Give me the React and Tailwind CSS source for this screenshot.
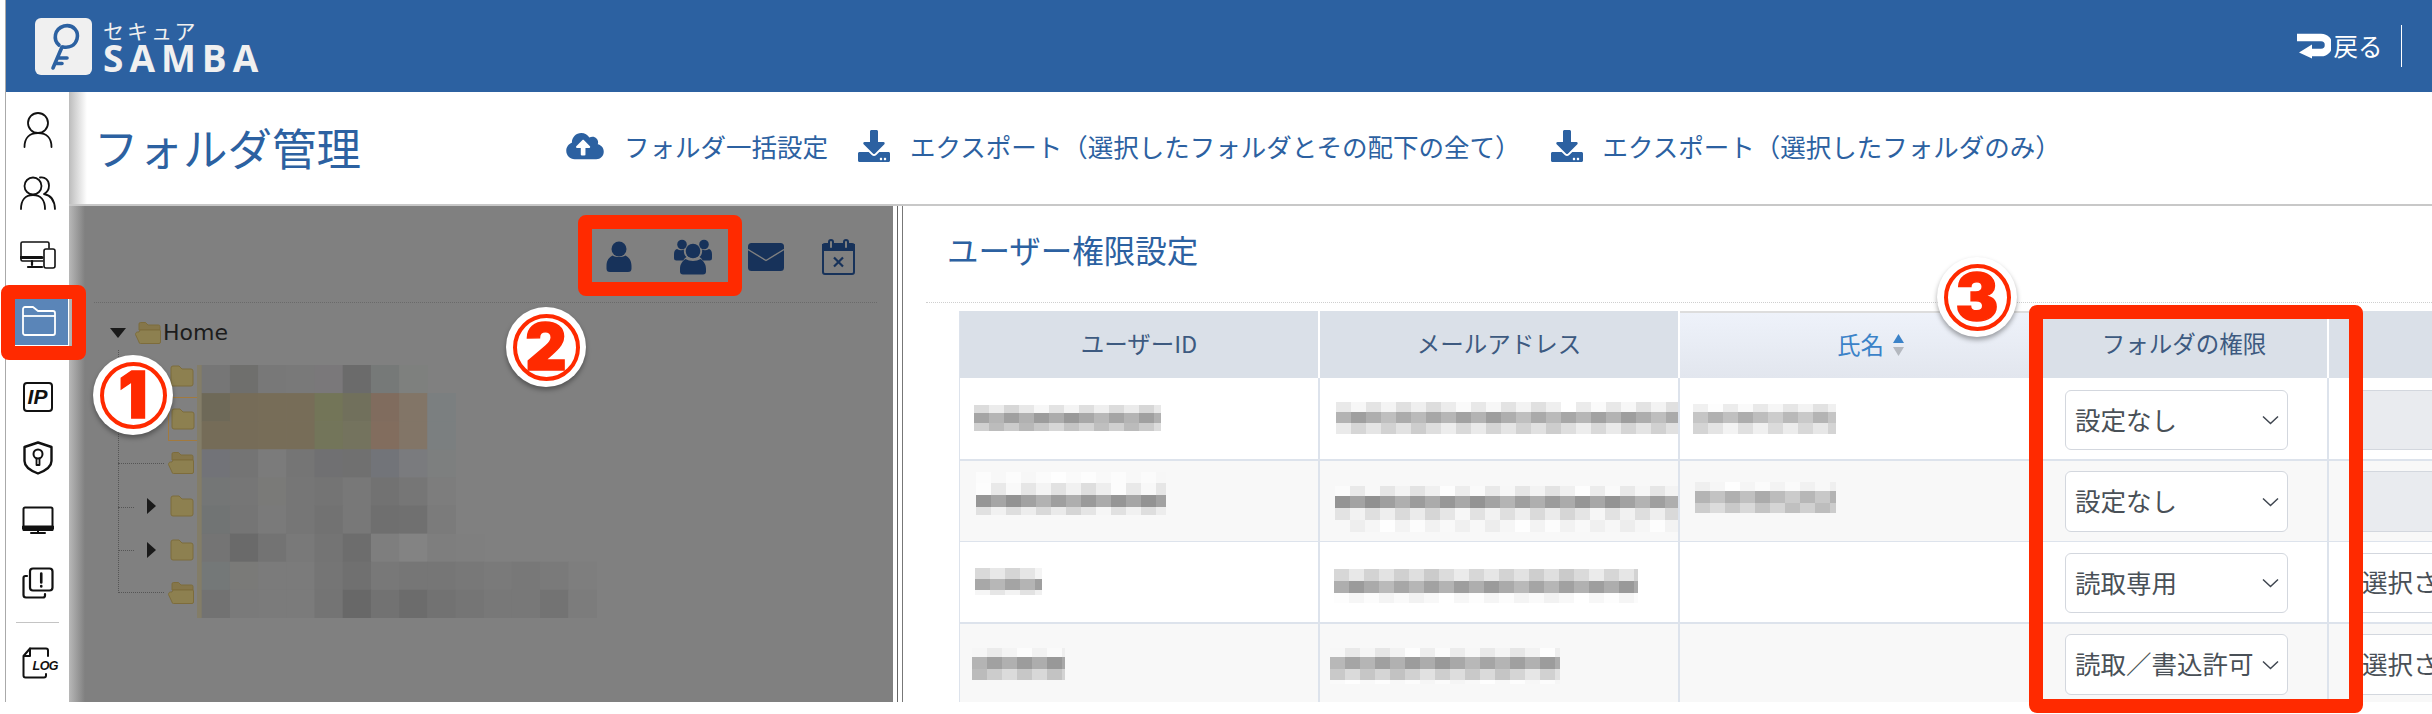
import React from "react";
import { FaCloudUploadAlt, FaDownload } from "react-icons/fa";

const CJK = "font-['Noto_Sans_CJK_JP','Noto_Sans',sans-serif]";

function Stroke({ w, h, children, color = "#111", sw = 1.8 }) {
  return (
    <svg width={w} height={h} viewBox={`0 0 ${w} ${h}`} fill="none" stroke={color} strokeWidth={sw} strokeLinecap="round" strokeLinejoin="round">
      {children}
    </svg>
  );
}

const IconUser = () => (
  <Stroke w={30} h={36}>
    <circle cx="15" cy="11" r="10" />
    <path d="M1.5 35c0-9 5-14 13.5-14s13.5 5 13.5 14" />
  </Stroke>
);
const IconGroup = () => (
  <Stroke w={36} h={34}>
    <circle cx="13" cy="10" r="8.5" />
    <path d="M1 33c0-9 4.5-14 12-14s12 5 12 14" />
    <path d="M20 1.5c5-1 9 2.5 9 8 0 4-2 7-5 8.5 6 1 10.5 6 11 15" />
  </Stroke>
);
const IconDevices = () => (
  <Stroke w={36} h={28} sw={1.6}>
    <path d="M23 20H2.500a1.500 1.500 0 0 1-1.500-1.500V2.500A1.500 1.500 0 0 1 2.500 1h25A1.500 1.500 0 0 1 29 2.500V7" />
    <path d="M1 16.500h21" strokeWidth="3" />
    <path d="M12 20v4M8 26h14" strokeWidth="2.2" />
    <rect x="24" y="8" width="11" height="19" rx="2" />
  </Stroke>
);
const IconFolder = () => (
  <svg width="34" height="30" viewBox="0 0 34 30" fill="none" stroke="#fff" strokeWidth="1.8" strokeLinejoin="round">
    <path d="M1 27V3a2 2 0 0 1 2-2h8l5 4h15a2 2 0 0 1 2 2v20a2 2 0 0 1-2 2H3a2 2 0 0 1-2-2z" />
    <path d="M1 10h32" />
  </svg>
);
const IconIP = () => (
  <div className="w-[30px] h-[30px] border-2 border-[#111] rounded-[4px] flex items-center justify-center font-['Liberation_Sans',sans-serif] font-bold italic text-[21px] leading-none text-[#111]">
    IP
  </div>
);
const IconShield = () => (
  <Stroke w={30} h={34} sw={2.4}>
    <path d="M15 1.500 28.500 6v14c0 5-5.500 9.500-13.500 12.500C7 29.500 1.500 25 1.500 20V6z" />
    <circle cx="15" cy="13" r="4.5" strokeWidth="2" />
    <path d="M13.500 17.500V24h3v-6.500" strokeWidth="1.8" />
  </Stroke>
);
const IconMonitor = () => (
  <Stroke w={32} h={28} sw={2}>
    <path d="M3 1.500h26a1.500 1.500 0 0 1 1.500 1.500v21H1.500V3A1.500 1.500 0 0 1 3 1.500z" />
    <path d="M1.500 21.500h29" strokeWidth="4" />
    <path d="M16 24v2M9 27h14" strokeWidth="2" />
  </Stroke>
);
const IconCopies = () => (
  <svg width="32" height="32" viewBox="0 0 32 32" fill="none" stroke="#111" strokeWidth="2.2" strokeLinejoin="round" strokeLinecap="round">
    <rect x="8" y="1.500" width="22.500" height="22" rx="3" />
    <path d="M5 9H3.500A2 2 0 0 0 1.500 11v17a2.500 2.500 0 0 0 2.500 2.500h17a2 2 0 0 0 2-2V27" />
    <path d="M19.250 6.500v9M19.250 19v.5" strokeWidth="2.6" />
  </svg>
);
const IconLog = () => (
  <div className="relative w-[32px] h-[32px]">
    <svg width="32" height="32" viewBox="0 0 32 32" fill="none" stroke="#111" strokeWidth="2" strokeLinejoin="round" strokeLinecap="round">
      <path d="M8 1.500h16a2 2 0 0 1 2 2V9" />
      <path d="M24 27v1.500a2 2 0 0 1-2 2H3.500a2 2 0 0 1-2-2V9L8 1.500V9H1.500" />
    </svg>
    <span className="absolute left-[11px] top-[13px] font-['Liberation_Sans',sans-serif] font-bold italic text-[12.5px] leading-none text-[#111] tracking-[-0.5px]">LOG</span>
  </div>
);

const IconPerson = () => (
  <svg width="26" height="32" viewBox="0 0 26 32" fill="#17325a">
    <circle cx="13" cy="8" r="7.5" />
    <path d="M0.500 25c0-6 3-9 6-10.500 3.500 2 9.500 2 13 0 3 1.500 6 4.500 6 10.500v2.500a3.500 3.500 0 0 1-3.500 3.500H4a3.500 3.500 0 0 1-3.500-3.500z" />
  </svg>
);
const IconPeople = () => (
  <svg width="38" height="36" viewBox="0 0 38 36" fill="#17325a">
    <circle cx="8" cy="5.500" r="4.8" />
    <circle cx="30" cy="5.500" r="4.8" />
    <path d="M0 15c0-3 1.500-4.500 3-5 2.500 1.500 5 1.500 7 .5-.5 3 .5 6 2.500 7.500-1.500.8-2.500 2-3.200 3.500H2.500A2.500 2.500 0 0 1 0 19z" />
    <path d="M38 15c0-3-1.500-4.500-3-5-2.500 1.500-5 1.500-7 .5.5 3-.5 6-2.500 7.500 1.500.8 2.500 2 3.200 3.500h6.800A2.500 2.500 0 0 0 38 19z" />
    <circle cx="19" cy="12" r="7.3" />
    <path d="M6 30c0-5 2.500-8 5.500-10 4 2.500 11 2.500 15 0 3 2 5.500 5 5.500 10v2.500a3 3 0 0 1-3 3H9a3 3 0 0 1-3-3z" />
  </svg>
);
const IconMail = () => (
  <svg width="36" height="28" viewBox="0 0 36 28" className="ml-[36px]">
    <rect width="36" height="28" rx="3.5" fill="#17325a" />
    <path d="M0 6.500 18 17.500 36 6.500" fill="none" stroke="#808080" strokeWidth="1.4" />
  </svg>
);
const IconCalendar = () => (
  <svg width="33" height="36" viewBox="0 0 33 36" fill="none" stroke="#17325a" strokeWidth="2" className="ml-[38px]">
    <rect x="1" y="5" width="31" height="30" rx="2" />
    <path d="M1 6h31v5H1z" fill="#17325a" />
    <rect x="7" y="1" width="4" height="9" rx="2" fill="#808080" />
    <rect x="22" y="1" width="4" height="9" rx="2" fill="#808080" />
    <path d="M12 18.500l9 9M21 18.500l-9 9" strokeWidth="2.2" />
  </svg>
);

function TreeFolder({ open }) {
  return (
    <svg width="26" height="22" viewBox="0 0 26 22" className="shrink-0">
      {open ? (
        <>
          <path d="M4 2a1.500 1.500 0 0 1 1.500-1.500h5L13 3h10.500A1.500 1.500 0 0 1 25 4.500V8H4z" fill="#85764a" stroke="#7d6c3c" />
          <path d="M5 8h19.500a1 1 0 0 1 1 1v11a1.500 1.500 0 0 1-1.500 1.500H5.500A1.500 1.500 0 0 1 4 20L.5 12.500C.5 11 1.500 10 2.500 10H4z" fill="#8d8050" stroke="#7d6c3c" />
        </>
      ) : (
        <path d="M3 3a2 2 0 0 1 2-2h6l3 3h9a2 2 0 0 1 2 2v13a2 2 0 0 1-2 2H5a2 2 0 0 1-2-2z" fill="#8d8050" stroke="#7d6c3c" />
      )}
    </svg>
  );
}

const MOSAIC = [
  ["#767676", "#6f6f6d", "#787878", "#797979", "#7a787a", "#6b6b6b", "#767978", "#7e807e"],
  ["#6e6958", "#766c58", "#776d58", "#776d58", "#737558", "#71705c", "#806c5e", "#827567", "#7b7f80"],
  ["#756c58", "#766c58", "#776d58", "#776d58", "#73755a", "#74735e", "#826d5e", "#827567", "#7b7f80"],
  ["#727378", "#747474", "#7b7b7b", "#757575", "#707072", "#707070", "#727479", "#7a7b7e", "#7d7f7f"],
  ["#747676", "#767676", "#7a7a78", "#767676", "#747474", "#787878", "#727272", "#767676", "#7d7d7d"],
  ["#717474", "#757575", "#7a7a7a", "#767676", "#727272", "#787878", "#6f6f6f", "#707070", "#7b7b7b"],
  ["#747474", "#6a6a6a", "#737373", "#797979", "#747474", "#6d6d6d", "#7e7e7e", "#838383", "#7e7e7e", "#7f7f7f"],
  ["#747878", "#7a7a78", "#7b7b7b", "#7b7b7b", "#757575", "#707070", "#787878", "#767676", "#767676", "#787878", "#7a7a7a", "#787878", "#7a7a7a", "#7e7e7e"],
  ["#727272", "#7a7a7a", "#7b7b7b", "#7b7b7b", "#747474", "#686868", "#727272", "#6c6c6c", "#727272", "#757575", "#787878", "#787878", "#737373", "#7c7c7c"],
];

function TreeMosaic() {
  return (
    <svg width="404" height="253" className="absolute left-[103px] top-[53px]">
      <rect x="0" y="0" width="5" height="253" fill="#837d68" />
      {MOSAIC.map((row, r) =>
        row.map((c, i) => <rect key={i} x={4.7 + i * 28.2} y={r * 28.1} width="28.7" height="28.6" fill={c} />)
      )}
    </svg>
  );
}

function Blur({ w, bands, cell = 15, left = 0, top = 0, seed = 1 }) {
  let y = 0;
  const total = bands.reduce((s, b) => s + b[0], 0);
  const n = Math.ceil(w / cell);
  return (
    <svg width={w} height={total} className="block" style={{ marginLeft: left, marginTop: top }}>
      {bands.map(([h, v], bi) => {
        const rects = [];
        for (let i = 0; i < n; i++) {
          const j = ((i * 7 + bi * 13 + seed * 5) * 2654435761 >>> 0) % 100;
          const amp = Math.min(255 - v, 18);
          const g = Math.round(v + ((j - 50) / 50) * amp);
          rects.push(<rect key={i} x={i * cell} y={y} width={cell + 0.5} height={h} fill={`rgb(${g},${g},${g})`} />);
        }
        y += h;
        return <g key={bi}>{rects}</g>;
      })}
    </svg>
  );
}

function Select({ label, h = "h-[60px]" }) {
  return (
    <div className={`${h} w-[223px] bg-white border border-[#d3d7de] rounded-[6px] flex items-center justify-between pl-[9px] pr-[8px] text-[25.5px] text-[#495057]`}>
      <span className="whitespace-nowrap leading-none -mt-[3px]">{label}</span>
      <svg width="17" height="10" viewBox="0 0 17 10" fill="none" stroke="#3f4650" strokeWidth="1.5" className="shrink-0">
        <path d="M1 1.500 8.500 8.500l7.500-7" />
      </svg>
    </div>
  );
}

function Field({ disabled, text, h = "h-[60px]" }) {
  return (
    <div className={`${h} ml-[20px] w-[120px] border-y whitespace-nowrap overflow-hidden flex items-center pl-[13px] pb-[3px] text-[25.5px] text-[#495057] ${disabled ? "bg-[#e9ebef] border-[#d3d7de]" : "bg-white border-[#d3d7de]"}`}>
      {text}
    </div>
  );
}

const ROWS = [
  {
    h: "h-[83px]", pt: "pt-[12px]", bg: "bg-white", border: "border-b-2",
    label: "設定なし", dis: true,
    c1: <Blur w={187} left={14} top={27} bands={[[8, 232], [10, 168], [8, 202]]} seed={1} />,
    c2: <Blur w={343} left={16} top={24} bands={[[10, 238], [11, 176], [11, 222]]} seed={2} />,
    c3: <Blur w={143} left={13} top={26} bands={[[8, 240], [11, 188], [11, 230]]} seed={3} />,
  },
  {
    h: "h-[81px]", pt: "pt-[10px]", bg: "bg-[#f8f8f8]", border: "border-b", sh: "h-[61px]",
    label: "設定なし", dis: true,
    c1: <Blur w={190} left={16} top={11} bands={[[11, 251], [12, 238], [12, 162], [8, 228]]} seed={4} />,
    c2: <Blur w={345} left={15} top={25} bands={[[10, 240], [12, 162], [12, 232], [12, 246]]} seed={5} />,
    c3: <Blur w={141} left={15} top={21} bands={[[9, 247], [12, 188], [10, 204]]} seed={6} />,
  },
  {
    h: "h-[82px]", pt: "pt-[11px]", bg: "bg-white", border: "border-b-2",
    label: "読取専用", text: "選択されていません",
    c1: <Blur w={67} left={15} top={26} bands={[[11, 228], [11, 170], [5, 240]]} seed={7} />,
    c2: <Blur w={304} left={14} top={27} bands={[[12, 220], [12, 170], [10, 248]]} seed={8} />,
  },
  {
    h: "h-[78px]", pt: "pt-[10px]", bg: "bg-[#f8f8f8]", sh: "h-[61px]",
    label: "読取／書込許可", text: "選択されていません",
    c1: <Blur w={93} left={12} top={24} bands={[[9, 245], [12, 170], [11, 204]]} seed={9} />,
    c2: <Blur w={230} left={10} top={24} bands={[[9, 242], [12, 168], [11, 212], [4, 250]]} seed={10} />,
  },
];

function Badge({ n, className }) {
  return (
    <div className={`absolute w-[80px] h-[80px] rounded-full bg-white shadow-[0_3px_5px_rgba(0,0,0,0.35)] flex items-center justify-center ${className}`}>
      <div className="w-[67px] h-[67px] rounded-full border-[4px] border-[#ff2a00] flex items-center justify-center">
        <span className="font-['Inter',sans-serif] font-black text-[64px] leading-none text-[#ff2a00] [-webkit-text-stroke:1.5px_#ff2a00]">{n}</span>
      </div>
    </div>
  );
}

const RedBox = ({ className }) => <div className={`absolute border-[14px] border-[#ff2a00] rounded-[8px] ${className}`} />;

const TreeRow = ({ caret, open, selected }) => (
  <div className="relative h-[43.5px] flex items-center">
    {caret && <div className="absolute left-[53px] w-0 h-0 border-y-[8px] border-y-transparent border-l-[9px] border-l-[#1a1a1a]" />}
    <div className={`absolute left-[74px] ${selected ? "w-[30px] h-[44px] border border-[#a27a3e] flex items-center" : "w-[26px]"}`}>
      <TreeFolder open={open} />
    </div>
  </div>
);

export default function App() {
  return (
    <div className={`relative w-[2432px] h-[714px] overflow-hidden bg-white flex ${CJK}`}>
      <div className="w-[5px] shrink-0" />
      <div className="w-px h-[702px] shrink-0 bg-[#aaaaaa]" />
      <div className="flex-1 min-w-0 h-[702px] flex flex-col">
        {/* top bar */}
        <header className="h-[92px] shrink-0 bg-[#2c61a1] flex items-center pl-[29px] text-white">
          <div className="w-[57px] h-[57px] bg-[#f0f0f0] rounded-[6px] flex items-center justify-center">
            <svg width="40" height="50" viewBox="0 0 40 50" fill="none" stroke="#2c61a1" strokeWidth="3.6" strokeLinecap="round">
              <path d="M15 24C9 19 10 8 20 5c10-2 15 6 13 13-2 7-8 9-14 8" />
              <path d="M18 26 9 47M14 37h9M11 42.500h7" />
            </svg>
          </div>
          <div className="ml-[11px] flex flex-col text-[#f0f0f0] leading-none -mt-[1px]">
            <span className="text-[21px] tracking-[3px] leading-[24px]">セキュア</span>
            <span className="font-['Open_Sans',sans-serif] font-bold text-[37px] tracking-[6px] leading-[31px] h-[31px]">SAMBA</span>
          </div>
          <div className="ml-auto flex items-center">
            <svg width="34" height="26" viewBox="0 0 34 26" fill="none" className="shrink-0">
              <path d="M0 4.500h24c10 0 10 15 0 15H12" stroke="#fff" strokeWidth="7.5" />
              <path d="M2 19.500 15 11.500v14z" fill="#fff" />
            </svg>
            <span className="ml-[3px] text-[24.5px] leading-none">戻る</span>
            <div className="ml-[18px] mr-[30px] w-[1.5px] h-[42px] bg-white" />
          </div>
        </header>

        <div className="flex-1 min-h-0 flex">
          {/* sidebar */}
          <aside className="w-[63px] shrink-0 bg-white flex flex-col items-center pt-[7px]">
            <div className="h-[62px] flex items-center justify-center"><IconUser /></div>
            <div className="h-[64px] flex items-center justify-center"><IconGroup /></div>
            <div className="h-[62px] flex items-center justify-center"><IconDevices /></div>
            <div className="mt-[12px] self-start ml-[8px] w-[56px] h-[47px] bg-[#5a85b8] border-r-[2px] border-white flex items-center justify-center pr-[4px]"><IconFolder /></div>
            <div className="mt-[21px] h-[62px] flex items-center justify-center"><IconIP /></div>
            <div className="h-[62px] flex items-center justify-center"><IconShield /></div>
            <div className="h-[62px] flex items-center justify-center"><IconMonitor /></div>
            <div className="h-[64px] flex items-center justify-center"><IconCopies /></div>
            <div className="mt-[8px] w-[43px] h-px bg-[#c4c4c4]" />
            <div className="h-[79px] flex items-center justify-center"><IconLog /></div>
          </aside>

          <div className="flex-1 min-w-0 flex flex-col">
            {/* page title bar */}
            <div className="h-[114px] shrink-0 border-b-2 border-[#c8c8c8] bg-[linear-gradient(to_right,#bcbcbc,#ffffff_18px)] flex items-center pl-[25px] pb-[2px] text-[#2c61a1]">
              <h1 className="text-[44.5px] font-normal leading-none whitespace-nowrap w-[472px]">フォルダ管理</h1>
              <div className="flex items-center text-[25.5px] whitespace-nowrap -mt-[2px]">
                <FaCloudUploadAlt className="w-[38px] h-[30px] shrink-0" />
                <span className="ml-[20px]">フォルダ一括設定</span>
                <FaDownload className="ml-[30px] w-[32px] h-[32px] shrink-0" />
                <span className="ml-[20px]">エクスポート（選択したフォルダとその配下の全て）</span>
                <FaDownload className="ml-[30px] w-[32px] h-[32px] shrink-0" />
                <span className="ml-[20px]">エクスポート（選択したフォルダのみ）</span>
              </div>
            </div>

            <div className="flex-1 min-h-0 flex">
              {/* left pane */}
              <section className="w-[824px] shrink-0 bg-[linear-gradient(to_right,#b8b8b8,#808080_16px)] pl-[25px] pr-[16px]">
                <div className="h-[97px] border-b border-dotted border-[#6a6a6a] flex items-center justify-end pr-[22px] pt-[5px] text-[#17325a]">
                  <IconPerson />
                  <div className="ml-[42px]"><IconPeople /></div>
                  <IconMail />
                  <IconCalendar />
                </div>
                <div className="relative mt-[9px]">
                  <div className="relative h-[42px] flex items-center">
                    <div className="absolute left-[16px] w-0 h-0 border-x-[8px] border-x-transparent border-t-[10px] border-t-[#1a1a1a]" />
                    <div className="absolute left-[41px]"><TreeFolder open /></div>
                    <span className="absolute left-[69px] font-['DejaVu_Sans',sans-serif] text-[22px] leading-none text-[#1c1c1c]">Home</span>
                  </div>
                  <TreeRow caret />
                  <TreeRow caret selected />
                  <TreeRow open />
                  <TreeRow caret />
                  <TreeRow caret />
                  <TreeRow open />
                  <div className="absolute left-[24px] top-[38px] h-[243px] w-[46px] border-l border-b border-dotted border-[#555]" />
                  <div className="absolute left-[24px] top-[151px] w-[46px] border-t border-dotted border-[#555]" />
                  <div className="absolute left-[24px] top-[195px] w-[16px] border-t border-dotted border-[#555]" />
                  <div className="absolute left-[24px] top-[238px] w-[16px] border-t border-dotted border-[#555]" />
                  <TreeMosaic />
                </div>
              </section>

              {/* splitter */}
              <div className="w-[5px] shrink-0 border-r border-[#666]" />
              <div className="w-[5px] shrink-0 border-r border-[#777]" />

              {/* right pane */}
              <section className="flex-1 min-w-0 overflow-hidden bg-white pl-[23px]">
                <div className="h-[97px] border-b border-dotted border-[#cfcfcf] flex items-center pl-[21px] pb-[8px]">
                  <h2 className="text-[31.5px] font-normal leading-none text-[#2c61a1] whitespace-nowrap">ユーザー権限設定</h2>
                </div>
                <div className="mt-[8px] ml-[33px] w-[1473px] border-l-[1.5px] border-[#dde3ec]">
                  <div className="flex h-[67px] text-[23.5px] text-[#3d5a80] text-center">
                    <div className="w-[360px] bg-[#dae0e8] border-r-2 border-white flex items-center justify-center pb-[2px]">ユーザーID</div>
                    <div className="w-[360px] bg-[#dae0e8] border-r-2 border-white flex items-center justify-center pb-[2px]">メールアドレス</div>
                    <div className="w-[361px] bg-[linear-gradient(#eef2fa,#e2e6ee)] border-t-2 border-[#dddddd] flex items-center justify-center pl-[20px] pb-[2px] text-[#3b82c8]">
                      氏名
                      <svg width="11" height="24" viewBox="0 0 11 24" className="ml-[9px]">
                        <path d="M5.500 1 11 10H0z" fill="#3b82c8" />
                        <path d="M5.500 23 0 14h11z" fill="#b4b8bf" />
                      </svg>
                    </div>
                    <div className="w-[288px] bg-[#dae0e8] border-r-2 border-white flex items-center justify-center pb-[2px]">フォルダの権限</div>
                    <div className="flex-1 bg-[#dae0e8]" />
                  </div>
                  {ROWS.map((r, i) => (
                    <div key={i} className={`flex ${r.bg} ${r.border ?? ""} border-[#dde3ec] box-border ${r.h}`}>
                      <div className="w-[360px] border-r-2 border-[#dde3ec] overflow-hidden">{r.c1}</div>
                      <div className="w-[360px] border-r-2 border-[#dde3ec] overflow-hidden">{r.c2}</div>
                      <div className="w-[361px] border-r-2 border-[#dde3ec] overflow-hidden">{r.c3}</div>
                      <div className={`w-[288px] border-r-2 border-[#dde3ec] pl-[24px] ${r.pt}`}>
                        <Select label={r.label} h={r.sh} />
                      </div>
                      <div className={`flex-1 overflow-hidden ${r.pt}`}>
                        <Field disabled={r.dis} text={r.text} h={r.sh} />
                      </div>
                    </div>
                  ))}
                </div>
              </section>
            </div>
          </div>
        </div>
      </div>

      {/* annotations */}
      <RedBox className="left-[1px] top-[285px] w-[85px] h-[75px]" />
      <RedBox className="left-[578px] top-[215px] w-[164px] h-[81px]" />
      <RedBox className="left-[2029px] top-[305px] w-[334px] h-[408px]" />
      <Badge n="1" className="left-[93px] top-[355px]" />
      <Badge n="2" className="left-[506px] top-[307px]" />
      <Badge n="3" className="left-[1937px] top-[257px]" />
    </div>
  );
}
